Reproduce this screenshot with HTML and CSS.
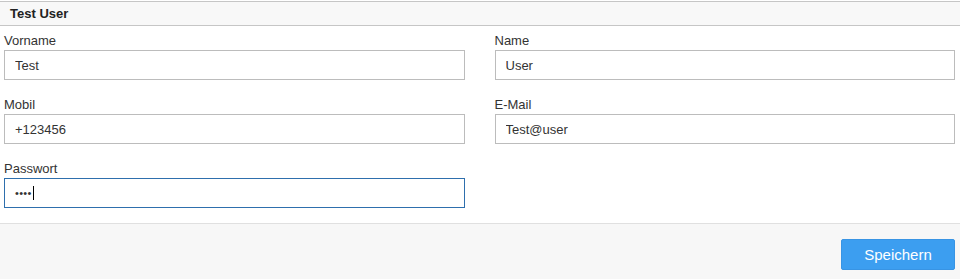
FILE: index.html
```html
<!DOCTYPE html>
<html lang="de">
<head>
<meta charset="utf-8">
<title>Test User</title>
<link rel="stylesheet" href="styles.css">
</head>
<body>
<div class="panel">
  <div class="panel-header">Test User</div>
  <form class="panel-body">
    <div class="field">
      <label class="field-label" for="vorname">Vorname</label>
      <input class="field-input" id="vorname" type="text" value="Test">
    </div>
    <div class="field">
      <label class="field-label" for="name">Name</label>
      <input class="field-input" id="name" type="text" value="User">
    </div>
    <div class="field">
      <label class="field-label" for="mobil">Mobil</label>
      <input class="field-input" id="mobil" type="text" value="+123456">
    </div>
    <div class="field">
      <label class="field-label" for="email">E-Mail</label>
      <input class="field-input" id="email" type="text" value="Test@user">
    </div>
    <div class="field">
      <label class="field-label" for="passwort">Passwort</label>
      <div class="field-input field-input--focused" id="passwort"><span class="pw-dots">••••</span><span class="caret"></span></div>
    </div>
  </form>
  <div class="panel-footer">
    <button class="btn-primary" type="button">Speichern</button>
  </div>
</div>
</body>
</html>
```
FILE: styles.css
```css
* {
  box-sizing: border-box;
}

html, body {
  margin: 0;
  padding: 0;
  background: #ffffff;
}

body {
  font-family: "Liberation Sans", Arial, sans-serif;
  font-size: 13px;
  color: #333333;
}

.panel {
  padding-top: 1px;
  display: flex;
  flex-direction: column;
  height: 279px;
}

.panel-header {
  background: #f8f8f8;
  border-top: 1px solid #c6c6c6;
  border-bottom: 1px solid #c6c6c6;
  height: 25px;
  line-height: 23px;
  padding-left: 10px;
  font-weight: bold;
  font-size: 13px;
  color: #222222;
}

.panel-body {
  display: grid;
  grid-template-columns: 1fr 1fr;
  column-gap: 30px;
  row-gap: 16px;
  padding: 6px 5px 15px 4px;
  margin: 0;
  flex: 1;
  align-content: start;
}

.field {
  display: flex;
  flex-direction: column;
}

.field-label {
  line-height: 18px;
  font-size: 13px;
  color: #333333;
}

.field-input {
  height: 30px;
  border: 1px solid #bcbcbc;
  border-radius: 0;
  padding: 0 10px;
  font-family: "Liberation Sans", Arial, sans-serif;
  font-size: 13px;
  color: #333333;
  background: #ffffff;
  outline: none;
  margin: 0;
  width: 100%;
}

.field-input--focused {
  border-color: #2e6fad;
  display: flex;
  align-items: center;
}

.pw-dots {
  font-size: 11px;
  letter-spacing: 0.3px;
  color: #333333;
  line-height: 1;
}

.caret {
  display: inline-block;
  width: 1px;
  height: 14px;
  background: #000000;
  margin-left: 1px;
}

.panel-footer {
  background: #f7f7f7;
  border-top: 1px solid #e0e0e0;
  height: 56px;
  display: flex;
  justify-content: flex-end;
  align-items: flex-start;
  padding: 15px 5px 0 0;
}

.btn-primary {
  width: 114px;
  height: 31px;
  background: #3c9ef0;
  border: 1px solid #3894e4;
  border-radius: 2px;
  color: #ffffff;
  font-family: "Liberation Sans", Arial, sans-serif;
  font-size: 15px;
  padding: 0;
  cursor: pointer;
}
```
